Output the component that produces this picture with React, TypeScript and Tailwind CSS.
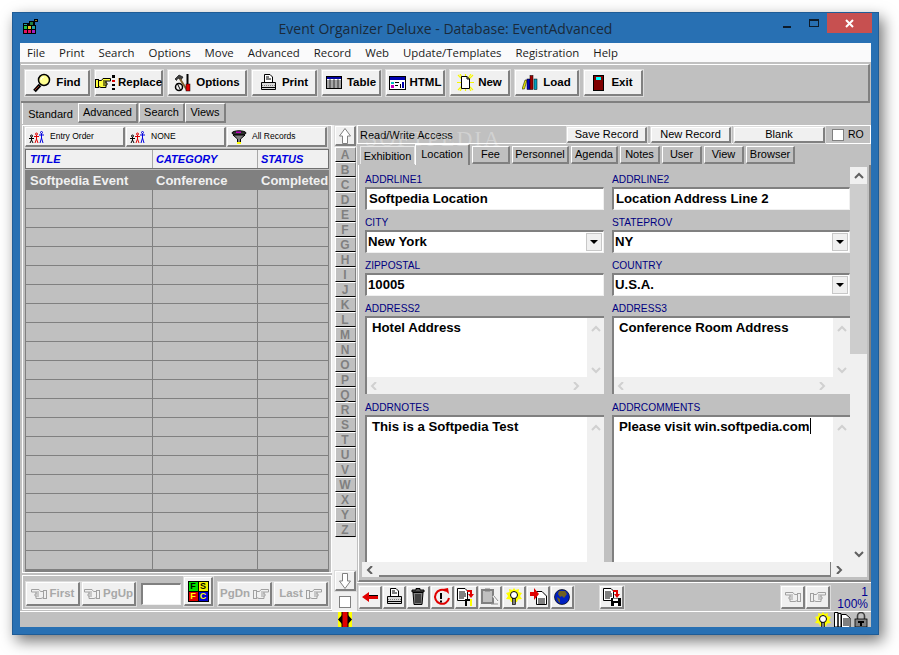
import React from 'react';

const raised = 'bg-[#f0f0f0] border-t border-l border-white border-r-2 border-b-2 border-r-[#808080] border-b-[#808080] shadow-[0_0_0_1px_#dcdcdc]';
const tabRaised = 'border-t border-l border-white border-r-2 border-b-2 border-r-[#808080] border-b-[#808080]';

function AppLogo() {
  return (
    <svg width="15" height="15" viewBox="0 0 15 15">
      <path d="M0 4 H6 V2 H11 V0 H15 V3 H12 V6 H13 V15 H0 Z" fill="#000" />
      <rect x="1" y="11" width="3" height="3" fill="#e01060" />
      <rect x="5" y="11" width="3" height="3" fill="#e01060" />
      <rect x="9" y="11" width="3" height="3" fill="#a020c0" />
      <rect x="1" y="7" width="3" height="3" fill="#20c040" />
      <rect x="5" y="7" width="3" height="3" fill="#e0c020" />
      <rect x="9" y="7" width="3" height="3" fill="#20a0a0" />
      <rect x="1" y="5" width="3" height="1" fill="#20a0a0" />
      <rect x="7" y="3" width="3" height="3" fill="#208040" />
      <rect x="12" y="1" width="2" height="1" fill="#a08020" />
    </svg>
  );
}

function Magnifier() {
  return (
    <svg width="18" height="20" viewBox="0 0 18 20">
      <path d="M7 12 L1.5 18" stroke="#000" strokeWidth="3.5" />
      <path d="M6 13 L2 17" stroke="#a03020" strokeWidth="1" />
      <circle cx="11" cy="7" r="5.5" fill="#ffff90" stroke="#000" strokeWidth="1.5" />
      <path d="M8 7 a3 3 0 0 1 3 -3" stroke="#fff" fill="none" />
    </svg>
  );
}

function HandPoint({ color = '#000', fill = '#ffff40', flip = false }: { color?: string; fill?: string; flip?: boolean }) {
  return (
    <svg width="16" height="12" viewBox="0 0 16 12" className={flip ? '-scale-x-100' : ''}>
      <rect x="0.5" y="2.5" width="3" height="8" fill={fill} stroke={color} />
      <path d="M3.5 3.5 H6.5 L8 1.5 H15.5 V4 H11 V6 H12 V8 H11 V10.5 H6 L3.5 9.5 Z" fill={fill} stroke={color} />
      <path d="M8 4 H11 M8 6 H11 M8 8 H11" stroke={color} />
    </svg>
  );
}

function ReplaceIcon() {
  return (
    <div className="flex items-center gap-[1px]">
      <HandPoint />
      <svg width="4" height="15" viewBox="0 0 4 15">
        <rect x="0" y="0" width="3" height="3" fill="#000" />
        <rect x="0" y="5" width="3" height="2" fill="#e00000" />
        <rect x="0" y="9" width="3" height="2" fill="#000" />
        <rect x="0" y="13" width="3" height="2" fill="#000" />
      </svg>
    </div>
  );
}

function Tools() {
  return (
    <svg width="17" height="18" viewBox="0 0 17 18">
      <path d="M1 5 L5 1 L9 3 L7 6 L4 4 L2.5 6.5 Z" fill="#404040" stroke="#000" strokeWidth="0.6" />
      <path d="M6 5 L13 16" stroke="#806030" strokeWidth="2" />
      <path d="M13.5 0 V10" stroke="#000" strokeWidth="2" />
      <rect x="12" y="10" width="4" height="7" fill="#e00000" stroke="#000" strokeWidth="0.5" />
      <circle cx="5" cy="13" r="3.5" fill="none" stroke="#000" strokeWidth="1.5" />
      <path d="M3 9 L7 17" stroke="#000" />
    </svg>
  );
}

function Printer() {
  return (
    <svg width="17" height="17" viewBox="0 0 17 17">
      <path d="M4.5 0.5 H10 L12.5 3 V8.5 H4.5 Z" fill="#fff" stroke="#000" />
      <path d="M6 3 H9 M6 5 H11" stroke="#000" />
      <path d="M1.5 8.5 H15.5 V15.5 H1.5 Z" fill="#d8d8d8" stroke="#000" />
      <path d="M2 11.5 H15" stroke="#808080" strokeDasharray="1 1" />
      <path d="M2 13.5 H15" stroke="#000" />
    </svg>
  );
}

function TableIcon() {
  return (
    <svg width="16" height="13" viewBox="0 0 16 13">
      <rect x="0.5" y="0.5" width="15" height="12" fill="#fff" stroke="#000" />
      <rect x="1" y="1" width="14" height="2" fill="#0000a0" />
      <path d="M1 5 H15 M1 7 H15 M1 9 H15 M1 11 H15 M4 3 V12 M8 3 V12 M12 3 V12" stroke="#000" strokeWidth="0.7" />
    </svg>
  );
}

function HtmlIcon() {
  return (
    <svg width="17" height="14" viewBox="0 0 17 14">
      <rect x="0.5" y="0.5" width="16" height="13" fill="#fff" stroke="#000" />
      <rect x="1" y="1" width="15" height="3" fill="#0000b0" />
      <rect x="2" y="6" width="3" height="2" fill="#00c0c0" />
      <rect x="2" y="9" width="3" height="3" fill="#c000c0" />
      <rect x="6" y="6" width="4" height="1" fill="#000" />
      <rect x="6" y="9" width="3" height="1" fill="#000" />
      <rect x="11" y="8" width="1" height="4" fill="#000" />
      <rect x="13" y="6" width="2" height="6" fill="#0000b0" />
    </svg>
  );
}

function NewIcon() {
  return (
    <svg width="17" height="17" viewBox="0 0 17 17">
      <path d="M1 1 L16 16 M16 1 L1 16 M0 8.5 H17 M8.5 0 V17 M3 0 L14 17 M14 0 L3 17" stroke="#f8f800" strokeWidth="1.2" />
      <path d="M4.5 2.5 H10 L12.5 5 V14.5 H4.5 Z" fill="#fff" stroke="#000" />
      <path d="M10 2.5 V5 H12.5" fill="none" stroke="#000" />
    </svg>
  );
}

function Books() {
  return (
    <svg width="16" height="15" viewBox="0 0 16 15">
      <path d="M0 14 L3 5 L5 5 L2.5 14 Z" fill="#e0e000" stroke="#000" strokeWidth="0.5" />
      <rect x="5" y="4" width="3" height="10.5" fill="#0000c0" stroke="#000" strokeWidth="0.5" />
      <rect x="8" y="0.5" width="3" height="14" fill="#a00000" stroke="#000" strokeWidth="0.5" />
      <rect x="12" y="4" width="3" height="10.5" fill="#00a0c0" stroke="#000" strokeWidth="0.5" />
    </svg>
  );
}

function ExitDoor() {
  return (
    <svg width="11" height="16" viewBox="0 0 11 16">
      <rect x="0" y="0" width="11" height="16" fill="#000" />
      <rect x="1" y="1" width="9" height="14" fill="#800000" />
      <rect x="3" y="2" width="5" height="3" fill="#00ffff" />
    </svg>
  );
}

function People() {
  return (
    <svg width="16" height="12" viewBox="0 0 16 12">
      <g fill="none" strokeWidth="1">
        <g stroke="#000">
          <circle cx="2.5" cy="5" r="1" />
          <path d="M0 7.5 H5 M2.5 6 V9 L1 12 M2.5 9 L4 12" />
        </g>
        <g stroke="#e00000">
          <circle cx="7.5" cy="3" r="1" />
          <path d="M5 5.5 H10 M7.5 4 V8 L6 12 M7.5 8 L9 12" />
        </g>
        <g stroke="#0000e0">
          <circle cx="12.5" cy="1.5" r="1" />
          <path d="M10 4 H15 M12.5 2.5 V7 L11 12 M12.5 7 L14 12" />
        </g>
      </g>
    </svg>
  );
}

function Funnel() {
  return (
    <svg width="16" height="14" viewBox="0 0 16 14">
      <ellipse cx="8" cy="3" rx="7" ry="2.2" fill="#303030" stroke="#000" />
      <rect x="5" y="1.5" width="5" height="1.5" fill="#c000c0" />
      <path d="M2 5 L6.5 9 V13 L9.5 12 V9 L14 5 Z" fill="#808080" stroke="#000" />
      <rect x="6" y="12" width="4" height="2" fill="#ffff00" />
    </svg>
  );
}

function Blocks() {
  const cells = [
    ['F', 'bg-[#00e000] text-black'],
    ['S', 'bg-[#f0f000] text-black'],
    ['F', 'bg-[#e00000] text-[#ffff00]'],
    ['C', 'bg-[#0000d0] text-[#ffff00]'],
  ];
  return (
    <div className="grid grid-cols-2 w-[21px] h-[21px] bg-black gap-[1px] p-[1px]">
      {cells.map(([t, c], i) => (
        <div key={i} className={`flex items-center justify-center text-[9px] font-bold leading-none ${c}`}>{t}</div>
      ))}
    </div>
  );
}

function Arrow({ up = false }: { up?: boolean }) {
  return (
    <svg width="12" height="16" viewBox="0 0 12 16">
      <path
        d={up ? 'M6 0.5 L11.5 8 H8.5 V15.5 H3.5 V8 H0.5 Z' : 'M6 15.5 L11.5 8 H8.5 V0.5 H3.5 V8 H0.5 Z'}
        fill="#fff"
        stroke="#808080"
      />
    </svg>
  );
}

function Chevron({ dir, color = '#808080', dim = false }: { dir: 'u' | 'd' | 'l' | 'r'; color?: string; dim?: boolean }) {
  const paths = { u: 'M1 6 L5 2 L9 6', d: 'M1 2 L5 6 L9 2', l: 'M6 0 L2 4 L6 8', r: 'M2 0 L6 4 L2 8' };
  return (
    <svg width="10" height="8" viewBox="0 0 10 8">
      <path d={paths[dir]} fill="none" stroke={dim ? '#d0d0d0' : color} strokeWidth="2" />
    </svg>
  );
}

function BackArrow() {
  return (
    <svg width="16" height="10" viewBox="0 0 16 10">
      <path d="M0 5 L7 0 V3 H16 V7 H7 V10 Z" fill="#e00000" />
      <path d="M7 3.5 H16" stroke="#000" />
    </svg>
  );
}

function Trash() {
  return (
    <svg width="14" height="17" viewBox="0 0 14 17">
      <path d="M5 0.5 H9 V2 H13 V4 H1 V2 H5 Z" fill="#555" stroke="#000" />
      <path d="M2 4.5 H12 L11 16.5 H3 Z" fill="#808080" stroke="#000" />
      <path d="M5 6 V15 M7 6 V15 M9 6 V15" stroke="#000" />
    </svg>
  );
}

function NoEntry() {
  return (
    <svg width="18" height="18" viewBox="0 0 18 18">
      <path d="M13 3 A7 7 0 1 0 16 10" fill="none" stroke="#e00000" strokeWidth="2" />
      <path d="M10 1 L15 0 L16 6 Z" fill="#e00000" />
      <path d="M8 5 V11" stroke="#000" strokeWidth="2" />
      <rect x="7" y="12.5" width="2" height="2" fill="#000" />
    </svg>
  );
}

function DocRed({ kind }: { kind: 'tools' | 'save' }) {
  return (
    <svg width="18" height="18" viewBox="0 0 18 18">
      <path d="M0.5 0.5 H8 L10.5 3 V12.5 H0.5 Z" fill="#fff" stroke="#000" />
      <path d="M2 4 H8 M2 6 H9 M2 8 H9 M2 10 H7" stroke="#000" />
      <path d="M10 2 H15 V6 H17 L14 10 L11 6 H13 V4 H10 Z" fill="#e00000" />
      {kind === 'save' ? (
        <g>
          <rect x="8" y="10" width="10" height="8" fill="#000" />
          <rect x="10" y="10.5" width="5" height="2.5" fill="#fff" />
          <rect x="11" y="15" width="4" height="3" fill="#fff" />
        </g>
      ) : (
        <g>
          <rect x="8" y="11" width="2" height="7" fill="#000" />
          <rect x="13" y="11" width="2" height="7" fill="#ffff00" />
          <rect x="10" y="11" width="3" height="2" fill="#000" />
        </g>
      )}
    </svg>
  );
}

function Clipboard() {
  return (
    <svg width="18" height="18" viewBox="0 0 18 18">
      <rect x="1" y="2" width="11" height="13" fill="#c0c0c0" stroke="#808080" strokeWidth="2" />
      <rect x="4" y="0.5" width="5" height="3" fill="#808080" />
      <path d="M12 8 L17 14 M9 17 H17" stroke="#f8f8f8" strokeWidth="1.5" />
      <path d="M13 8 L17 13 M10 16 H17" stroke="#909090" />
    </svg>
  );
}

function Bulb() {
  return (
    <svg width="16" height="18" viewBox="0 0 16 18">
      <path d="M8 0 L9.5 2 L13 1 L12.5 4 L16 5 L14 8 L16 11 L12 11.5 L11 14 H5 L4 11.5 L0 11 L2 8 L0 5 L3.5 4 L3 1 L6.5 2 Z" fill="#ffff00" />
      <circle cx="8" cy="7" r="3.5" fill="#fff" stroke="#000" />
      <rect x="6.5" y="10.5" width="3" height="6" fill="#808080" stroke="#000" strokeWidth="0.7" />
    </svg>
  );
}

function ArrowDoc() {
  return (
    <svg width="17" height="17" viewBox="0 0 17 17">
      <path d="M6.5 3.5 H12 L16.5 8 V16.5 H6.5 Z" fill="#fff" stroke="#000" />
      <path d="M8 11 H15 M8 13 H15 M8 15 H15" stroke="#000" />
      <path d="M0 4 H4 V0 L9 6 L4 12 V8 H0 Z" fill="#e00000" />
    </svg>
  );
}

function Globe() {
  return (
    <svg width="16" height="16" viewBox="0 0 16 16">
      <circle cx="8" cy="8" r="7.5" fill="#0020c0" stroke="#000" strokeWidth="0.7" />
      <path d="M5 2 L11 2 L13 5 L10 9 L8 7 L6 8 L4 5 Z" fill="#706020" />
      <path d="M3 8 L6 10 L6 14 L4 12 Z" fill="#706020" />
    </svg>
  );
}

function Pages() {
  return (
    <svg width="17" height="16" viewBox="0 0 17 16">
      <path d="M0.5 0.5 H4 V15 H0.5 Z M4 1.5 H7 V15 H4 Z" fill="#fff" stroke="#000" />
      <path d="M7.5 2.5 H12 L16 6 V15.5 H7.5 Z" fill="#fff" stroke="#000" />
      <path d="M9 7 H15 M9 9 H15 M9 11 H15 M9 13 H15" stroke="#000" />
    </svg>
  );
}

function Lock() {
  return (
    <svg width="14" height="15" viewBox="0 0 14 15">
      <path d="M3.5 7 V4 A3.5 3.5 0 0 1 10.5 4 V7" fill="none" stroke="#404040" strokeWidth="1.6" />
      <rect x="1" y="7" width="12" height="8" fill="#808080" stroke="#000" strokeWidth="0.8" />
      <rect x="4" y="9" width="6" height="2" fill="#000" />
      <rect x="6" y="11" width="2" height="3" fill="#000" />
    </svg>
  );
}

function Splitter() {
  return (
    <svg width="14" height="15" viewBox="0 0 14 15">
      <rect width="14" height="15" fill="#ffff00" />
      <rect x="4" width="6" height="15" fill="#e00000" />
      <path d="M0 7.5 L4 3 V12 Z M14 7.5 L10 3 V12 Z" fill="#000" />
      <path d="M4 0 V15 M10 0 V15" stroke="#000" />
    </svg>
  );
}

function WinMax() {
  return (
    <svg width="10" height="8" viewBox="0 0 10 8">
      <rect x="0.5" y="0.5" width="9" height="7" fill="none" stroke="#0d1b2a" />
      <rect x="0" y="0" width="10" height="2" fill="#0d1b2a" />
    </svg>
  );
}

const toolButtons = [
  { label: 'Find', icon: <Magnifier />, w: 'w-[65px]', gap: 'gap-[5px]' },
  { label: 'Replace', icon: <ReplaceIcon />, w: 'w-[68px]', gap: 'gap-[2px]' },
  { label: 'Options', icon: <Tools />, w: 'w-[79px]', gap: 'gap-[5px]' },
  { label: 'Print', icon: <Printer />, w: 'w-[65px]', gap: 'gap-[5px]' },
  { label: 'Table', icon: <TableIcon />, w: 'w-[59px]', gap: 'gap-[5px]' },
  { label: 'HTML', icon: <HtmlIcon />, w: 'w-[59px]', gap: 'gap-[4px]' },
  { label: 'New', icon: <NewIcon />, w: 'w-[60px]', gap: 'gap-[4px]' },
  { label: 'Load', icon: <Books />, w: 'w-[64px]', gap: 'gap-[5px]' },
  { label: 'Exit', icon: <ExitDoor />, w: 'w-[59px]', gap: 'gap-[7px]' },
];

const menus = ['File', 'Print', 'Search', 'Options', 'Move', 'Advanced', 'Record', 'Web', 'Update/Templates', 'Registration', 'Help'];
const letters = 'ABCDEFGHIJKLMNOPQRSTUVWXYZ'.split('');

const recordTabs = [
  { label: 'Fee', w: 'w-[38px]' },
  { label: 'Personnel', w: 'w-[57px]' },
  { label: 'Agenda', w: 'w-[47px]' },
  { label: 'Notes', w: 'w-[40px]' },
  { label: 'User', w: 'w-[40px]' },
  { label: 'View', w: 'w-[40px]' },
  { label: 'Browser', w: 'w-[49px]' },
];

function Field({ label, value, select, pad = 'pl-[2px]' }: { label: string; value: string; select?: boolean; pad?: string }) {
  return (
    <div className="flex flex-col">
      <div className="h-[15px] text-[10.2px] leading-[15px] text-[#000080]">{label}</div>
      <div className="h-[23px] flex items-center bg-white border-t-2 border-l-2 border-[#808080] border-b border-r border-b-[#f0f0f0] border-r-[#f0f0f0] relative">
        <span className={`text-[13.2px] font-bold text-black ${pad}`}>{value}</span>
        {select && (
          <span className="absolute right-[1px] top-[1px] bottom-[1px] w-[16px] flex items-center justify-center bg-[#f0f0f0] border border-[#c8c8c8]">
            <svg width="8" height="4" viewBox="0 0 8 4"><path d="M0 0 H8 L4 4 Z" fill="#000" /></svg>
          </span>
        )}
      </div>
    </div>
  );
}

function Memo({ label, value, tall, caret }: { label: string; value: string; tall?: boolean; caret?: boolean }) {
  return (
    <div className="flex flex-col">
      <div className="h-[15px] text-[10.2px] leading-[15px] text-[#000080]">{label}</div>
      <div className={`${tall ? 'h-[147px]' : 'h-[78px]'} flex bg-white border-t-2 border-l-2 border-[#808080] overflow-hidden`}>
        <div className="flex-1 flex flex-col min-w-0">
          <div className="flex-1 pl-[5px] pt-[1px] text-[13.2px] font-bold text-black leading-[18px]">
            {value}
            {caret && <span className="inline-block w-[1px] h-[16px] bg-black align-text-bottom" />}
          </div>
          {!tall && (
            <div className="h-[17px] bg-[#f0f0f0] flex items-center justify-between px-[3px]">
              <Chevron dir="l" dim />
              <span className="mr-[2px]"><Chevron dir="r" dim /></span>
            </div>
          )}
        </div>
        <div className={`w-[17px] bg-[#f0f0f0] flex flex-col items-center pt-[7px] ${tall ? '' : 'pb-[20px] justify-between'}`}>
          <Chevron dir="u" dim />
          {!tall && <Chevron dir="d" dim />}
        </div>
      </div>
    </div>
  );
}

function NavButton({ label, left }: { label: string; left: boolean }) {
  const text = <span className="text-[11.5px] font-bold text-[#a8a8a8]">{label}</span>;
  const hand = <HandPoint color="#a0a0a0" fill="#f0f0f0" flip={left} />;
  return (
    <div className={`w-[54px] h-[24px] flex items-center justify-center gap-[3px] ${raised}`}>
      {left ? hand : text}
      {left ? text : hand}
    </div>
  );
}

function IconButton({ children, wide }: { children: React.ReactNode; wide?: boolean }) {
  return <div className={`${wide ? 'w-[24px]' : 'w-[23px]'} h-[23px] flex items-center justify-center ${raised}`}>{children}</div>;
}

export default function App() {
  return (
    <div className="w-[899px] h-[655px] bg-white pl-[12px] pt-[12px] overflow-hidden" style={{ fontFamily: '"Liberation Sans", Arial, sans-serif' }}>
      <div className="w-[867px] h-[623px] bg-[#2870b3] border border-[#1f5c96] px-[7px] pb-[7px] flex flex-col shadow-[4px_6px_14px_rgba(0,0,0,0.55)]">
        {/* title bar */}
        <div className="h-[30px] relative flex items-center justify-center shrink-0">
          <span className="absolute left-[3px] top-[6px]"><AppLogo /></span>
          <span className="text-[14px] text-[#1a2a3a]" style={{ fontFamily: '"Open Sans", sans-serif' }}>
            Event Organizer Deluxe - Database: EventAdvanced
          </span>
          <span className="absolute left-[763px] top-[13px] w-[8px] h-[2px] bg-[#0d1b2a]" />
          <span className="absolute left-[789px] top-[6px]"><WinMax /></span>
          <span className="absolute left-[807px] top-0 w-[45px] h-[20px] bg-[#c75050] flex items-center justify-center">
            <svg width="9" height="9" viewBox="0 0 9 9"><path d="M1 1 L8 8 M8 1 L1 8" stroke="#fff" strokeWidth="2" /></svg>
          </span>
        </div>

        <div className="flex-1 min-h-0 bg-[#c0c0c0] flex flex-col w-[851px]">
          {/* menu */}
          <div className="h-[19px] bg-[#fafafb] shrink-0 flex items-center pl-[7px] gap-[14px] text-[11.4px] text-[#1a1a1a]" style={{ fontFamily: '"Open Sans", sans-serif' }}>
            {menus.map((m) => <span key={m}>{m}</span>)}
          </div>

          {/* toolbar */}
          <div className="h-[39px] mt-[2px] mx-[1px] shrink-0 border-t border-white border-b-2 border-b-[#808080] border-r-2 border-r-[#808080] flex items-center pl-[4px] gap-[5px]">
            {toolButtons.map((b) => (
              <div key={b.label} className={`${b.w} h-[26px] flex items-center justify-center ${b.gap} ${raised}`}>
                {b.icon}
                <span className="text-[11.5px] font-bold text-black">{b.label}</span>
              </div>
            ))}
          </div>

          {/* tabs */}
          <div className="h-[22px] shrink-0 flex items-start pl-[2px] text-[11px] text-black">
            <div className="w-[56px] h-[21px] flex items-center justify-center border-l border-white pt-[2px]">Standard</div>
            <div className={`w-[60px] h-[20px] flex items-center justify-center ${tabRaised}`}>Advanced</div>
            <div className={`w-[46px] h-[20px] ml-[1px] flex items-center justify-center ${tabRaised}`}>Search</div>
            <div className={`w-[41px] h-[20px] flex items-center justify-center ${tabRaised}`}>Views</div>
          </div>

          {/* main */}
          <div className="flex-1 min-h-0 flex pl-[2px]">
            {/* left list */}
            <div className="w-[310px] flex flex-col shrink-0">
              <div className="h-[448px] border border-white px-[2px] pt-[1px] flex flex-col">
                <div className="flex gap-[1px] h-[20px] shrink-0 text-[8.5px] text-black">
                  <div className={`w-[100px] flex items-center pl-[3px] gap-[5px] ${raised}`}><People /><span>Entry Order</span></div>
                  <div className={`w-[100px] flex items-center pl-[3px] gap-[5px] ${raised}`}><People /><span>NONE</span></div>
                  <div className={`w-[100px] flex items-center pl-[3px] gap-[5px] ${raised}`}><Funnel /><span>All Records</span></div>
                </div>
                <div className="mt-[2px] h-[20px] shrink-0 grid grid-cols-[127px_105px_1fr] bg-[#f0f0f0] border border-[#707070] text-[11px] font-bold italic text-[#0000e0]">
                  <div className="flex items-center pl-[4px] border-r border-[#a8a8a8]">TITLE</div>
                  <div className="flex items-center pl-[3px] border-r border-[#a8a8a8]">CATEGORY</div>
                  <div className="flex items-center pl-[3px]">STATUS</div>
                </div>
                <div className="mt-[1px] flex-1 min-h-0 border border-[#808080] border-b-2 overflow-hidden">
                  <div className="h-[19px] grid grid-cols-[127px_105px_1fr] bg-[#808080] text-[13px] font-bold text-[#f0f0f0] overflow-hidden">
                    <div className="pl-[4px] leading-[19px] whitespace-nowrap">Softpedia Event</div>
                    <div className="pl-[3px] leading-[19px] whitespace-nowrap">Conference</div>
                    <div className="pl-[3px] leading-[19px] whitespace-nowrap overflow-hidden">Completed</div>
                  </div>
                  {Array.from({ length: 20 }).map((_, i) => (
                    <div key={i} className="h-[19px] grid grid-cols-[127px_105px_1fr] border-b border-[#808080]">
                      <div className="border-r border-[#808080]" />
                      <div className="border-r border-[#808080]" />
                      <div />
                    </div>
                  ))}
                </div>
              </div>
              <div className="h-[35px] border border-white mt-[2px] flex items-end pb-[3px] pl-[3px]">
                <NavButton label="First" left />
                <div className="ml-[2px]"><NavButton label="PgUp" left /></div>
                <div className="ml-[5px] mb-[1px] w-[40px] h-[22px] bg-white border-t-2 border-l-2 border-[#808080] border-b border-r border-b-[#f0f0f0] border-r-[#f0f0f0]" />
                <div className={`ml-[3px] w-[29px] h-[29px] flex items-center justify-center ${raised}`}><Blocks /></div>
                <div className="ml-[5px]"><NavButton label="PgDn" left={false} /></div>
                <div className="ml-[2px]"><NavButton label="Last" left={false} /></div>
              </div>
            </div>

            {/* letters */}
            <div className="w-[25px] shrink-0 bg-[#f0f0f0] flex flex-col items-center pl-[1px] pt-[1px]">
              <div className={`w-[21px] h-[20px] flex items-center justify-center ${raised}`}><Arrow up /></div>
              <div className="flex flex-col mt-[1px] h-[390px]">
                {letters.map((l) => (
                  <div key={l} className="w-[21px] h-[15px] flex items-center justify-center bg-[#c0c0c0] border-t border-l border-white border-b border-r border-b-black border-r-[#808080] text-[12px] font-bold text-[#808080] leading-none">{l}</div>
                ))}
              </div>
              <div className="flex-1" />
              <div className={`w-[21px] h-[20px] flex items-center justify-center ${raised}`}><Arrow /></div>
              <div className="w-[12px] h-[12px] bg-white border border-[#808080] mt-[5px] mb-[3px]" />
            </div>

            {/* record panel */}
            <div className="flex-1 min-w-0 flex flex-col relative">
              <span className="absolute left-[8px] top-[-3px] text-[22px] tracking-[2px] text-white/30 pointer-events-none" style={{ fontFamily: '"Liberation Serif", serif' }}>SOFTPEDIA</span>
              <div className="h-[19px] shrink-0 border border-white flex items-center pl-[2px] pt-[1px] text-[11px] text-black">
                <span className="w-[207px]">Read/Write Access</span>
                <div className={`w-[80px] h-[16px] flex items-center justify-center ${raised}`}>Save Record</div>
                <div className={`w-[80px] h-[16px] flex items-center justify-center ml-[4px] ${raised}`}>New Record</div>
                <div className={`w-[91px] h-[16px] flex items-center justify-center ml-[3px] ${raised}`}>Blank</div>
                <div className="w-[12px] h-[12px] bg-white border border-[#808080] ml-[7px]" />
                <span className="ml-[4px] text-[10.5px]">RO</span>
              </div>
              <div className="h-[21px] shrink-0 flex items-end pl-[3px] text-[11px] text-black">
                <div className="w-[55px] h-[18px] pt-[1px] flex items-center justify-center border-t border-l border-r border-[#e8e8e8] mb-[1px]">Exhibition</div>
                <div className="w-[55px] h-[21px] bg-[#c0c0c0] flex items-center justify-center border-t border-l border-white border-r-2 border-r-[#808080] pb-[2px]">Location</div>
                <div className="flex gap-[2px] ml-[2px] mb-[1px]">
                  {recordTabs.map((t) => (
                    <div key={t.label} className={`${t.w} h-[18px] flex items-center justify-center ${tabRaised}`}>{t.label}</div>
                  ))}
                </div>
              </div>

              <div className="h-[417px] shrink-0 flex flex-col border-l border-white ml-[1px] border-b-2 border-b-[#808080] border-r-2 border-r-[#808080] pl-[3px]">
                <div className="flex-1 min-h-0 flex">
                  <div className="flex-1 min-w-0 pl-[3px] pt-[7px] grid grid-cols-[239px_238px] gap-x-[8px] content-start overflow-hidden">
                    <div className="mb-[5px]"><Field label="ADDRLINE1" value="Softpedia Location" /></div>
                    <div className="mb-[5px]"><Field label="ADDRLINE2" value="Location Address Line 2" /></div>
                    <div className="mb-[5px]"><Field label="CITY" value="New York" select pad="pl-[1px]" /></div>
                    <div className="mb-[5px]"><Field label="STATEPROV" value="NY" select pad="pl-[1px]" /></div>
                    <div className="mb-[5px]"><Field label="ZIPPOSTAL" value="10005" pad="pl-[1px]" /></div>
                    <div className="mb-[5px]"><Field label="COUNTRY" value="U.S.A." select pad="pl-[1px]" /></div>
                    <div className="mb-[6px]"><Memo label="ADDRESS2" value="Hotel Address" /></div>
                    <div className="mb-[6px]"><Memo label="ADDRESS3" value="Conference Room Address" /></div>
                    <Memo label="ADDRNOTES" value="This is a Softpedia Test" tall />
                    <Memo label="ADDRCOMMENTS" value="Please visit win.softpedia.com" tall caret />
                  </div>
                  <div className="w-[17px] mr-[2px] mt-[2px] bg-[#f0f0f0] shrink-0 flex flex-col items-center">
                    <div className="h-[17px] flex items-center"><Chevron dir="u" color="#606060" /></div>
                    <div className="w-full h-[170px] bg-[#cdcdcd]" />
                    <div className="flex-1" />
                    <div className="h-[17px] flex items-center"><Chevron dir="d" color="#606060" /></div>
                  </div>
                </div>
                <div className="h-[15px] mb-[3px] shrink-0 flex bg-[#f0f0f0] mr-[2px]">
                  <div className="w-[17px] flex items-center justify-center"><Chevron dir="l" color="#606060" /></div>
                  <div className="flex-1 border-b-2 border-[#808080] border-r border-r-[#808080]" />
                  <div className="w-[36px] flex items-center pl-[4px]"><Chevron dir="r" color="#606060" /></div>
                </div>
              </div>

              {/* bottom toolbar */}
              <div className="flex-1 min-h-0 relative flex items-center pl-[2px] gap-[1px] border-t border-white">
                <IconButton><BackArrow /></IconButton>
                <IconButton><Printer /></IconButton>
                <IconButton><Trash /></IconButton>
                <IconButton><NoEntry /></IconButton>
                <IconButton><DocRed kind="tools" /></IconButton>
                <IconButton><Clipboard /></IconButton>
                <IconButton><Bulb /></IconButton>
                <IconButton><ArrowDoc /></IconButton>
                <IconButton><Globe /></IconButton>
                <div className="ml-[25px]"><IconButton wide><DocRed kind="save" /></IconButton></div>
                <div className="ml-auto flex gap-[1px]">
                  <IconButton wide><HandPoint color="#a0a0a0" fill="#f0f0f0" flip /></IconButton>
                  <IconButton wide><HandPoint color="#a0a0a0" fill="#f0f0f0" /></IconButton>
                </div>
                <div className="w-[40px] pr-[3px] pt-[1px] text-right text-[12px] leading-[12px] text-[#000090]">
                  <div>1</div>
                  <div>100%</div>
                </div>
              </div>
            </div>
          </div>

          {/* status bar */}
          <div className="h-[16px] shrink-0 border-t border-white relative overflow-hidden">
            <span className="absolute left-[318px] top-0"><Splitter /></span>
            <div className="absolute right-[3px] top-0 flex items-start gap-[3px]">
              <Bulb />
              <Pages />
              <Lock />
            </div>
          </div>
        </div>
      </div>
    </div>
  );
}
